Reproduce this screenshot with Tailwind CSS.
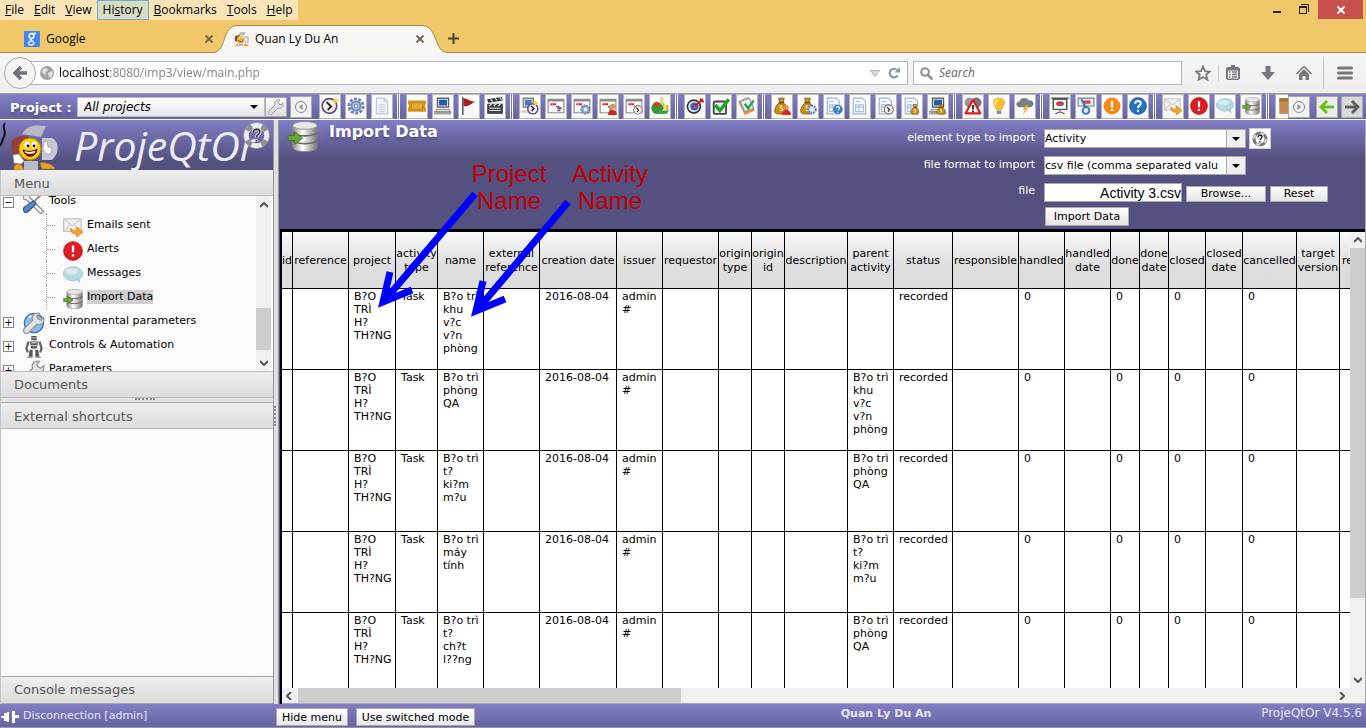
<!DOCTYPE html>
<html lang="en">
<head>
  <meta charset="utf-8" />
  <title>Quan Ly Du An</title>
  <script src="https://cdn.jsdelivr.net/npm/@tailwindcss/browser@4"></script>
</head>
<body class="h-screen flex flex-col overflow-hidden relative bg-white text-black text-xs font-['DejaVu_Sans',Verdana,sans-serif]">

  <!-- icon sprite -->
  <svg class="absolute w-0 h-0">
    <defs>
      <linearGradient id="metal"><stop offset="0" stop-color="#8a8a8a"/><stop offset=".4" stop-color="#fff"/><stop offset="1" stop-color="#777"/></linearGradient>
      <symbol id="i-clock" viewBox="0 0 16 16"><circle cx="7.500" cy="8" r="6.500" fill="#f4f0e0" stroke="#5c4c8c" stroke-width="1.500"/><path d="M5 4.500l4 4-3 3" stroke="#222" stroke-width="1.700" fill="none"/><path d="M13 0l1 2 2 1-2 1-1 2-1-2-2-1 2-1z" fill="#f6d61c"/></symbol>
      <symbol id="i-gear" viewBox="0 0 16 16"><circle cx="8" cy="8" r="6.300" fill="none" stroke="#6f84b4" stroke-width="2.600" stroke-dasharray="2.600 1.350"/><circle cx="8" cy="8" r="4" fill="#b9c8e6" stroke="#7188bb" stroke-width="1.800"/><circle cx="8" cy="8" r="1.600" fill="#fff" stroke="#7188bb"/></symbol>
      <symbol id="i-doc" viewBox="0 0 16 16"><path d="M3 1h7l3 3v11H3z" fill="#f3f7fd" stroke="#b8c4da"/><path d="M10 1v3h3M5 7h6M5 9h6M5 11h6M5 13h6" stroke="#c5cfe2" fill="none"/></symbol>
      <symbol id="i-ticket" viewBox="0 0 16 16"><path d="M0 3h16v3l-1 2 1 2v3H0v-3l1-2-1-2z" fill="#d8951a"/><path d="M3 5h10v6H3z" fill="#e8ab35" stroke="#b87a10" stroke-width=".7"/></symbol>
      <symbol id="i-pc" viewBox="0 0 16 16"><path d="M3 1h10v8H3z" fill="#cfd6dc" stroke="#555"/><path d="M4.500 2.500h7v5h-7z" fill="#2460b0"/><path d="M2 11h12v3H2zM0 13h15v2H0z" fill="#ddd" stroke="#777" stroke-width=".7"/></symbol>
      <symbol id="i-flag" viewBox="0 0 16 16"><path d="M2.500 0v16" stroke="#555" stroke-width="1.300"/><path d="M3 1c4 0 5 3 11 3-4 1-5 5-11 4z" fill="#a81c20"/></symbol>
      <symbol id="i-clap" viewBox="0 0 16 16"><path d="M1 6h14v9H1z" fill="#444"/><path d="M1 2l13-2 1 3L2 5z" fill="#333"/><path d="M4 2l2 2M8 1l2 2M12 .5l2 2M3 8l2-2M7 8l2-2M11 8l2-2M3 10h10M3 12h10" stroke="#ddd"/></symbol>
      <symbol id="i-pcclock" viewBox="0 0 16 16"><path d="M2 1h9v8H2z" fill="#cfd6dc" stroke="#777"/><path d="M3.500 2.500h6v5h-6z" fill="#5577b5"/><path d="M0 12h12v2H0z" fill="#ccc"/><circle cx="10.500" cy="10.500" r="4.500" fill="#eee" stroke="#5b4a90" stroke-width="1.300"/><path d="M9 8l2.500 2.500-2 2" stroke="#222" fill="none" stroke-width="1.300"/><path d="M13 3l1 1.500 1.500 1-1.500 1-1 1.500-1-1.500-1.500-1 1.500-1z" fill="#f6d61c"/></symbol>
      <symbol id="i-plan" viewBox="0 0 16 16"><path d="M1 2h14v12H1z" fill="#fff" stroke="#888"/><path d="M1 2h14v2H1z" fill="#888"/><path d="M3 6.500h5M9 10h4" stroke="#e02020" stroke-width="1.800"/><path d="M8 8.500h3M9 12h3" stroke="#3450c0" stroke-width="1.500"/><path d="M5 4v10M9 4v10" stroke="#ddd" stroke-width=".5"/></symbol>
      <symbol id="i-plangear" viewBox="0 0 16 16"><use href="#i-plan"/><circle cx="11" cy="11" r="3.500" fill="#9fb4dc" stroke="#6f86b8" stroke-width="2" stroke-dasharray="1.700 .7"/><circle cx="11" cy="11" r="1.400" fill="#fff"/></symbol>
      <symbol id="i-planman" viewBox="0 0 16 16"><use href="#i-plan"/><circle cx="12" cy="8.500" r="2.500" fill="#d99a50"/><path d="M8 16c0-6 8-6 8 0z" fill="#d22"/></symbol>
      <symbol id="i-planclock" viewBox="0 0 16 16"><use href="#i-plan"/><circle cx="11.500" cy="11.500" r="3.800" fill="#f3efdc" stroke="#8a7d9c"/><path d="M10 9.500l2 2-1 2" stroke="#222" fill="none"/></symbol>
      <symbol id="i-chart" viewBox="0 0 16 16"><path d="M10 5h2v6h-2zM13 7h2.500v5H13z" fill="#d0c020"/><path d="M8 0h3v7H8z" fill="#ded97c"/><circle cx="5.500" cy="10" r="5.200" fill="#35973a"/><path d="M5.500 10L2 5.500A5.200 5.200 0 0 1 8 5.400z" fill="#e53525"/><path d="M7 12h9l-2 3H6z" fill="#4ca24a"/></symbol>
      <symbol id="i-target" viewBox="0 0 16 16"><circle cx="7" cy="8.500" r="6.500" fill="#333"/><circle cx="7" cy="8.500" r="5" fill="#e8e8f2"/><circle cx="7.500" cy="8.500" r="3.600" fill="#3266c0"/><circle cx="8" cy="8.500" r="1.300" fill="#f44"/><path d="M8 8l7-6M13 1v3h3" stroke="#d01818" stroke-width="1.500" fill="none"/></symbol>
      <symbol id="i-check" viewBox="0 0 16 16"><rect x="1.500" y="4" width="11" height="11" rx="1.500" fill="#eee" stroke="#444" stroke-width="1.600"/><path d="M3 7l4 5 8-10" stroke="#1ea51e" stroke-width="3" fill="none"/></symbol>
      <symbol id="i-notes" viewBox="0 0 16 16"><path d="M0 4l9-4 6 12-9 4z" fill="#f08c28"/><path d="M2 4l8-3 4 9-8 3z" fill="#eaf2fb" stroke="#6a9cd0"/><path d="M6 6l3 4 5-7" stroke="#25a030" stroke-width="2" fill="none"/></symbol>
      <symbol id="i-bag" viewBox="0 0 16 16"><path d="M5 1h5L9 5c5 3 5 10 1 10H4C0 15 1 8 6 5z" fill="#c98e1d" stroke="#8d5f0c" stroke-width=".8"/><path d="M5 5h5" stroke="#70480a" stroke-width="1.300"/><path d="M8.500 8H6.500v2h2v2h-2.500" stroke="#ffe9a8" fill="none"/></symbol>
      <symbol id="i-bagman" viewBox="0 0 16 16"><use href="#i-bag"/><circle cx="12" cy="9" r="2" fill="#d99a50"/><path d="M8 16c0-6 8-6 8 0z" fill="#d22"/></symbol>
      <symbol id="i-baggear" viewBox="0 0 16 16"><use href="#i-bag"/><circle cx="11.500" cy="11" r="3.300" fill="#dde6f5" stroke="#6f86b8" stroke-width="2" stroke-dasharray="1.700 .7"/></symbol>
      <symbol id="i-bill" viewBox="0 0 16 16"><path d="M2 1h8l3 3v11H2z" fill="#f5f9ff" stroke="#a0b4cf"/><path d="M4 4h4M4 7h7v6H4zM7 7v6M4 9h7" stroke="#a9c0dd" fill="none"/></symbol>
      <symbol id="i-billq" viewBox="0 0 16 16"><use href="#i-bill"/><circle cx="11.500" cy="11" r="4.200" fill="#3182c8"/><path d="M10 10c0-2 3-2 3 0 0 1-1.500 1-1.500 2M11.500 13v1" stroke="#fff" fill="none"/></symbol>
      <symbol id="i-billclock" viewBox="0 0 16 16"><use href="#i-bill"/><circle cx="10.500" cy="11" r="4" fill="#f3efdc" stroke="#777090"/><path d="M9 9l2 2-1 2" stroke="#222" fill="none"/></symbol>
      <symbol id="i-billbag" viewBox="0 0 16 16"><use href="#i-bill"/><use href="#i-bag" x="6" y="6" width="10" height="10"/></symbol>
      <symbol id="i-pcbag" viewBox="0 0 16 16"><use href="#i-pc"/><use href="#i-bag" x="6" y="6" width="10" height="10"/></symbol>
      <symbol id="i-warn" viewBox="0 0 16 16"><circle cx="5" cy="5" r="4.500" fill="#999"/><circle cx="11" cy="5" r="4.500" fill="#777"/><path d="M8 2.500l6.500 12h-13z" fill="#fff" stroke="#d32222" stroke-width="2" stroke-linejoin="round"/><path d="M8 7v4M8 12v1.500" stroke="#111" stroke-width="1.500"/></symbol>
      <symbol id="i-bulb" viewBox="0 0 16 16"><path d="M8 1c6 0 6 5 3 8l-.5 2h-5L5 9C2 6 2 1 8 1z" fill="#fbc02c" stroke="#e8a015" stroke-width=".6"/><path d="M7 3c-2 0-3 2-2 4" stroke="#fff3b0" fill="none" stroke-width="1.500"/><path d="M6 12h4v3H6z" fill="#888"/></symbol>
      <symbol id="i-storm" viewBox="0 0 16 16"><path d="M3 9C-1 8 0 4 3 4c1-4 7-4 8-1 5-1 6 5 2 6z" fill="#7a7f86"/><path d="M9 7l-3 4h2l-2 5 5-6H9l2-3z" fill="#f7a81b"/></symbol>
      <symbol id="i-board" viewBox="0 0 16 16"><path d="M0 1h16M2 2h12v9H2z" fill="#fff" stroke="#555" stroke-width="1.300"/><ellipse cx="8" cy="6" rx="3.500" ry="2.200" fill="#d33"/><path d="M8 6h3.500A3.500 2.200 0 0 1 8 8z" fill="#57c"/><path d="M8 11v3M4 15l4-2 4 2" stroke="#666" fill="none"/></symbol>
      <symbol id="i-review" viewBox="0 0 16 16"><path d="M1 1h14v7H1z" fill="#eef" stroke="#777"/><path d="M6 3h6v3H6z" fill="#d44"/><path d="M4 2l4 8" stroke="#3a7ab8" stroke-width="2"/><circle cx="8" cy="12" r="3" fill="#d9ecfa" stroke="#3a7ab8" stroke-width="1.700"/></symbol>
      <symbol id="i-orange" viewBox="0 0 16 16"><circle cx="8" cy="8" r="7.500" fill="#f28a1c"/><path d="M8 3.500v5.500M8 10.500v2" stroke="#fff" stroke-width="2"/></symbol>
      <symbol id="i-help" viewBox="0 0 16 16"><circle cx="8" cy="8" r="7.500" fill="#2671bd" stroke="#1a558f" stroke-width=".6"/><path d="M5.500 6c0-3.500 5-3 5-.3 0 1.800-2.500 1.700-2.500 4M8 11.300v1.900" stroke="#fff" stroke-width="1.800" fill="none"/></symbol>
      <symbol id="i-mail" viewBox="0 0 16 16"><path d="M.5 1.500h14v10H.5z" fill="#f1f1f1" stroke="#c4c4c4"/><path d="M.5 1.500l7 5.500 7-5.500M.5 11.500l5-5M14.500 11.500l-5-5" fill="none" stroke="#cfcfcf"/><path d="M6 9c2 2 4 2 5 1.500V8l5 4-5 4v-2.500C8 14 6 12 6 9z" fill="#f5a32a" stroke="#d07f12" stroke-width=".6"/></symbol>
      <symbol id="i-alert" viewBox="0 0 16 16"><circle cx="8" cy="8" r="7.500" fill="#dd1c20" stroke="#a81014" stroke-width=".6"/><path d="M8 3.500v5.500M8 10.500v2" stroke="#fff" stroke-width="1.900"/></symbol>
      <symbol id="i-msg" viewBox="0 0 16 16"><ellipse cx="8" cy="7" rx="7.700" ry="5.700" fill="#b9d8e3" stroke="#9cbccb" stroke-width=".6"/><path d="M10 11l4 4-1-5z" fill="#a9cbd8"/><ellipse cx="7" cy="5" rx="5" ry="2.500" fill="#d6eaf1"/></symbol>
      <symbol id="i-db" viewBox="0 0 16 16"><path d="M3 2.300v11.200c0 3 12.500 3 12.500 0V2.300z" fill="url(#metal)" stroke="#888" stroke-width=".4"/><ellipse cx="9.250" cy="2.300" rx="6.250" ry="2" fill="#e6e6e6" stroke="#999" stroke-width=".5"/><path d="M3 5.800c1 2.500 11.500 2.500 12.500 0M3 9.800c1 2.500 11.500 2.500 12.500 0" stroke="#666" fill="none" stroke-width=".8"/><path d="M.5 7.500H4v-2l4 3.300-4 3.300v-2H.5z" fill="#6aa53a" stroke="#46791e" stroke-width=".5"/></symbol>
      <symbol id="i-wrench" viewBox="0 0 16 16"><path d="M1 15c-1-1-1-2 0-3l6-6c-1-3 1-6 5-5l-2 2 1 2 2 1 2-2c1 4-2 6-5 5l-6 6c-1 1-2 1-3 0z" fill="#e2e2e2" stroke="#9a9a9a"/></symbol>
      <symbol id="i-tools" viewBox="0 0 16 16"><path d="M1 1l3 0 1 3 10 10-2 2L3 6 0 5z" fill="#eee" stroke="#888" stroke-width=".8"/><path d="M15 0l-8 8" stroke="#999" stroke-width="1.600"/><path d="M7.500 6.500l2 2L4 14c-2 2-5 0-3-3z" fill="#5b88c4" stroke="#2c568f" stroke-width=".8"/></symbol>
      <symbol id="i-env" viewBox="0 0 16 16"><circle cx="8" cy="8" r="7" fill="#8cbcec" stroke="#3a6fae"/><path d="M4 4c3-2 5 0 4 2M3 9c2 0 3 2 5 1" stroke="#dff0ff" fill="none" stroke-width="1.500"/><use href="#i-wrench"/></symbol>
      <symbol id="i-robot" viewBox="0 0 16 16"><path d="M6 0h4v3H6zM5 4h6l-1 5H6zM5 10h2v5H4zM9 10h2l1 5H9z" fill="#555"/><path d="M4 4L2.500 9l1 3M12 4l1.500 5-1 3" stroke="#666" stroke-width="1.700" fill="none"/><path d="M6 5h4M6 7h4M6 1.500h4" stroke="#ccc" stroke-width=".8"/><path d="M3 15.500h4M9 15.500h4" stroke="#999"/></symbol>
      <symbol id="i-book" viewBox="0 0 16 16"><path d="M2 1h14v14H2z" fill="#c28a4e"/><path d="M2 1h14v3H2z" fill="#a87238"/></symbol>
      <symbol id="i-face" viewBox="0 0 60 50"><path d="M5 3c-4 5 3 8-2 16-1 4-3 8-6 7" stroke="#111" stroke-width="2" fill="none"/><path d="M22 14c6-10 14-9 24-8l-5 11z" fill="#b9b9c4"/><path d="M12 20c4-4 10-5 16-4v24H16c-4-6-6-14-4-20z" fill="#96403e"/><path d="M42 18h10c8 4 7 16 0 22H42z" fill="#c8c8d4"/><path d="M44 22l3-1 1 6 4 1-1 6h-5l-3-5z" fill="#fff" stroke="#888" stroke-width=".6"/><circle cx="30" cy="29" r="11" fill="#fad016" stroke="#b58508"/><ellipse cx="27" cy="25" rx="2.400" ry="3.600" fill="#fff"/><ellipse cx="34" cy="25" rx="2.400" ry="3.600" fill="#fff"/><circle cx="28" cy="26" r="1.400"/><circle cx="34" cy="26" r="1.400"/><path d="M23 30c4 2 10 2 14-1-1 9-11 10-14 1z" fill="#a01515" stroke="#400"/><path d="M24.500 31c4 1.500 8 1 11-.5l-1 2.500c-3 1-6 1-9 0z" fill="#fff"/><path d="M24 41h14v9H24z" fill="#b9b9c8"/><path d="M13 35l6-1 5 7-3 3-7-1z" fill="#fff" stroke="#999" stroke-width=".6"/><path d="M14 47c2-5 8-4 10 3h-10zM40 43c6-1 14 2 15 6H42z" fill="#e9a31c" stroke="#b06f0c" stroke-width=".5"/></symbol>
      <symbol id="i-ring" viewBox="0 0 26 26"><circle cx="13" cy="13" r="10" fill="none" stroke="#ececec" stroke-width="5"/><circle cx="13" cy="13" r="10" fill="none" stroke="#8f8f8f" stroke-width="5" stroke-dasharray="6 9.700" stroke-dashoffset="-4.800"/><circle cx="13" cy="13" r="12.400" fill="none" stroke="#888" stroke-width=".5"/><path d="M10 10c0-4 7-4 6 0 0 2-3 2-3 5M13 17v2" stroke="#e8e8f4" stroke-width="3.500" fill="none"/><path d="M10 10c0-4 7-4 6 0 0 2-3 2-3 5M13 17v2" stroke="#444" stroke-width="1.800" fill="none"/></symbol>
      <symbol id="i-up" viewBox="0 0 8 6"><path d="M0 5l4-4 4 4" stroke="#555" stroke-width="2" fill="none"/></symbol>
      <symbol id="i-down" viewBox="0 0 8 6"><path d="M0 1l4 4 4-4" stroke="#555" stroke-width="2" fill="none"/></symbol>
      <symbol id="i-caret" viewBox="0 0 8 4"><path d="M0 0h8L4 4z"/></symbol>
      <symbol id="i-x" viewBox="0 0 8 8"><path d="M0.500 0.500l7 7M7.500 0.500l-7 7" stroke="#756a54" stroke-width="2"/></symbol>
    </defs>
  </svg>

  <!-- browser window -->
  <header class="h-[53px] shrink-0 bg-[#f0c869] border-b border-[#a58a48] flex flex-col font-['Open_Sans','Noto_Sans',sans-serif]">
    <div class="flex items-start justify-between">
      <nav class="flex h-5 bg-[#f8e4b6] leading-5">
        <a href="#" class="px-[5px]"><u>F</u>ile</a>
        <a href="#" class="px-[5px]"><u>E</u>dit</a>
        <a href="#" class="px-[5px]"><u>V</u>iew</a>
        <a href="#" class="px-[5px] bg-[#d9dcc4] border border-[#79a7c4] leading-[18px]">Hi<u>s</u>tory</a>
        <a href="#" class="px-[5px]"><u>B</u>ookmarks</a>
        <a href="#" class="px-[5px]"><u>T</u>ools</a>
        <a href="#" class="px-[5px]"><u>H</u>elp</a>
      </nav>
      <div class="flex items-start mr-[3px]">
        <button aria-label="Minimize" class="w-5 h-5"><svg class="w-5 h-5" viewBox="0 0 20 20"><path d="M7 11h8v2H7z" fill="#222"/></svg></button>
        <button aria-label="Restore" class="w-8 h-5 flex justify-center"><svg class="w-5 h-5" viewBox="0 0 20 20"><path d="M7.500 6.500h7v7h-7zM9 4.500h7.500V12" fill="none" stroke="#222"/><path d="M7 6h8v2H7z" fill="#222"/></svg></button>
        <button aria-label="Close" class="w-[45px] h-[19px] bg-[#c8504f] flex justify-center items-center"><svg class="w-2 h-2" viewBox="0 0 8 8"><path d="M0.500 0.500l7 7M7.500 0.500l-7 7" stroke="#fff" stroke-width="2"/></svg></button>
      </div>
    </div>
    <div class="flex flex-1 items-end">
      <div class="w-[213px] h-7 flex items-center pl-6 gap-[6px] pt-px">
        <svg class="w-4 h-4" viewBox="0 0 16 16"><rect width="16" height="16" rx="1" fill="#4285f4"/><ellipse cx="7.500" cy="5" rx="2.300" ry="2.500" fill="none" stroke="#fff" stroke-width="1.500"/><path d="M9 2.500h3M7 7.500c-2 1.500 2.500 2 2.800 4 .2 3.500-5.800 3-5.300.5.300-1.700 2-1.800 3.500-1.800" fill="none" stroke="#fff" stroke-width="1.300"/></svg>
        <span class="flex-1">Google</span>
        <svg class="w-2 h-2"><use href="#i-x"/></svg>
      </div>
      <div class="relative w-[235px] h-7 flex items-center pl-5 pr-6 gap-[6px] -mb-px">
        <svg class="absolute inset-0 w-full h-full" viewBox="0 0 235 28" preserveAspectRatio="none"><path d="M0 27.500C14 27.500 8 .5 25 .5H208C226 .5 220 27.500 235 27.500V29H0z" fill="#f6f6f5" stroke="#a58a48"/></svg>
        <svg class="relative w-4 h-4" viewBox="6 4 50 46"><use href="#i-face" width="60" height="50"/></svg>
        <span class="relative flex-1">Quan Ly Du An</span>
        <svg class="relative w-2 h-2"><use href="#i-x"/></svg>
      </div>
      <button aria-label="New tab" class="w-3 h-7 flex items-center"><svg class="w-[11px] h-[11px]" viewBox="0 0 11 11"><path d="M5.500 0v11M0 5.500h11" stroke="#4b4433" stroke-width="2"/></svg></button>
    </div>
  </header>

  <div class="h-10 shrink-0 flex items-center bg-linear-to-b from-[#f6f6f6] to-[#eeeeee] font-['Open_Sans','Noto_Sans',sans-serif]">
    <button aria-label="Back" class="relative z-10 ml-1 w-8 h-8 rounded-full bg-[#f4f4f4] border border-[#a9a9a9] flex items-center justify-center"><svg class="w-[15px] h-[14px]" viewBox="0 0 15 14"><path d="M8 1L2 7l6 6M2 7h12" stroke="#6f7276" stroke-width="3.500" fill="none"/></svg></button>
    <div class="flex-1 h-6 -ml-2 pl-[11px] pr-[5px] bg-white border border-[#b1b8c4] flex items-center gap-[5px]">
      <svg class="w-[14px] h-[14px]" viewBox="0 0 14 14"><circle cx="7" cy="7" r="7" fill="#a3a3a3"/><path d="M3 3l3-1 2 2-2 2-1 3-3-3zM8 7l4-2 1 2-2 5-2-1z" fill="#e4e4e4"/></svg>
      <input aria-label="Address" value="localhost:8080/imp3/view/main.php" class="flex-1 min-w-0 outline-none bg-linear-to-r from-black from-[50px] to-[#7e7e7e] to-[50px] bg-clip-text text-transparent" />
      <svg class="w-[10px] h-[7px]" viewBox="0 0 10 7"><path d="M0.500 0.500h9L5 6.500z" fill="#d5dce2" stroke="#aab4bd"/></svg>
      <svg class="w-3 h-3 ml-[3px] mr-[2px]" viewBox="0 0 12 12"><path d="M9.500 8.500A4.300 4.300 0 1 1 9 3" stroke="#8796a5" stroke-width="2.200" fill="none"/><path d="M12 0v5.500H6.500z" fill="#8796a5"/></svg>
    </div>
    <div class="w-[269px] h-6 ml-[5px] px-[6px] bg-white border border-[#b1b8c4] flex items-center gap-[6px]">
      <svg class="w-[13px] h-[13px]" viewBox="0 0 13 13"><circle cx="5" cy="5" r="3.800" stroke="#8d8d8d" stroke-width="2" fill="none"/><path d="M8 8l4.500 4.500" stroke="#8d8d8d" stroke-width="2.500"/></svg>
      <input aria-label="Search" placeholder="Search" class="flex-1 min-w-0 italic outline-none placeholder:text-[#666]" />
    </div>
    <div class="flex items-center w-[184px] text-[#75787c]">
      <svg class="w-4 h-4 ml-[13px]" viewBox="0 0 16 16"><path d="M8 1.500l2 4.600 5 .4-3.800 3.200 1.200 4.900L8 12l-4.400 2.600 1.200-4.900L1 6.500l5-.4z" fill="none" stroke="currentColor" stroke-width="1.800"/></svg>
      <span class="w-px h-4 bg-[#c5ccd4] ml-[7px]"></span>
      <svg class="w-4 h-4 ml-[6px]" viewBox="0 0 16 16"><path d="M6 0h4v2h3.500L15 3.500v10L13.500 15h-11L1 13.500v-10L2.500 2H6z" fill="currentColor"/><path d="M3 5.500h10v8H3z" fill="#f2f2f2"/><path d="M4 7h1.500M7 7h5M4 9.500h1.500M7 9.500h5M4 12h1.500M7 12h5" stroke="currentColor" stroke-width="1.300"/></svg>
      <svg class="w-4 h-4 ml-[19px]" viewBox="0 0 16 16"><path d="M5.500 1h5v6H15l-7 8-7-8h4.500z" fill="currentColor"/></svg>
      <svg class="w-4 h-4 ml-5" viewBox="0 0 16 16"><path d="M.5 9L8 1.500 15.500 9" fill="none" stroke="currentColor" stroke-width="1.500"/><path d="M3 9l5-5 5 5v6H9.500v-4h-3v4H3z" fill="currentColor"/></svg>
      <span class="w-px h-8 bg-[#bac4cf] ml-[11px]"></span>
      <svg class="w-4 h-[14px] ml-[13px]" viewBox="0 0 16 14"><path d="M1.500 2h13M1.500 7h13M1.500 12h13" stroke="currentColor" stroke-width="3" stroke-linecap="round"/></svg>
    </div>
  </div>

  <!-- application toolbar -->
  <div class="h-[27px] shrink-0 border-t border-t-[#a0a0a0] border-b border-b-white bg-linear-to-b from-[#827ec6] to-[#6764a0] flex items-center">
    <label for="project" class="pl-[10px] pt-[2px] w-[77px] text-[13px] font-bold text-white text-shadow-lg">Project :</label>
    <div class="relative">
      <select id="project" class="appearance-none w-[188px] h-5 px-[6px] italic bg-linear-to-b from-white to-[#e6e6e6] border border-[#bbb]"><option>All projects</option></select>
      <svg class="absolute right-[7px] top-2 w-2 h-1 pointer-events-none"><use href="#i-caret"/></svg>
    </div>
    <button aria-label="Project parameters" class="w-[22px] h-5 bg-linear-to-b from-white to-[#ddd] border border-[#aaa] flex items-center justify-center"><svg class="w-[18px] h-4"><use href="#i-wrench"/></svg></button>
    <button aria-label="Scroll left" class="ml-[3px] w-[22px] h-[22px] bg-[#f2f2f2] border border-[#aaa] flex items-center justify-center"><svg class="w-3 h-3" viewBox="0 0 12 12"><circle cx="6" cy="6" r="5.500" fill="none" stroke="#888"/><path d="M7.500 3v6L4 6z" fill="#888"/></svg></button>
    <div id="toolbar" class="flex-1 min-w-0 h-[25px] ml-[7px] flex overflow-hidden"></div>
    <button aria-label="Scroll right" class="w-[22px] h-[22px] bg-[#f2f2f2] border border-[#aaa] flex items-center justify-center"><svg class="w-3 h-3" viewBox="0 0 12 12"><circle cx="6" cy="6" r="5.500" fill="none" stroke="#888"/><path d="M4.500 3v6L8 6z" fill="#888"/></svg></button>
    <button aria-label="Previous" class="w-[22px] h-[22px] ml-[6px] bg-[#ececec] border border-[#aaa] flex items-center justify-center"><svg class="w-4 h-4" viewBox="0 0 16 16"><path d="M8 2L2 8l6 6M2 8h13" stroke="#6cc01c" stroke-width="3" fill="none"/></svg></button>
    <button aria-label="Next" class="w-[22px] h-[22px] ml-[3px] mr-[3px] bg-[#d9d9d9] border border-[#aaa] flex items-center justify-center"><svg class="w-4 h-4" viewBox="0 0 16 16"><path d="M8 2l6 6-6 6M14 8H1" stroke="#606060" stroke-width="3" fill="none"/></svg></button>
  </div>

  <div class="flex-1 min-h-0 flex">
    <!-- left panel -->
    <aside class="w-[273px] shrink-0 flex flex-col border-l border-[#c4c4c4]">
      <div class="relative h-[50px] shrink-0 -ml-px bg-linear-to-b from-[#827ec6] to-[#545180] to-80% overflow-hidden">
        <svg class="absolute left-0 top-0 w-[60px] h-[50px]"><use href="#i-face"/></svg>
        <div class="pl-[74px] text-[41px] leading-[50px] italic text-[#ecebf8] font-['Open_Sans',sans-serif]">ProjeQtOr</div>
        <svg class="absolute right-[3px] top-[2px] w-[27px] h-[27px]"><use href="#i-ring"/></svg>
      </div>
      <h2 class="h-[26px] shrink-0 pl-[13px] leading-[27px] text-[13px] text-[#555] bg-linear-to-b from-[#eeeeee] to-[#dcdcdc] border-b border-[#bbb]">Menu</h2>
      <div class="h-[175px] shrink-0 flex overflow-hidden bg-[#fafafa]">
        <ul id="tree" class="flex-1 -mt-[7px] text-[11px]"></ul>
        <div class="w-[15px] bg-[#f0f0f0] flex flex-col items-center mr-[2px]">
          <svg class="w-2 h-[6px] mt-[6px]"><use href="#i-up"/></svg>
          <div class="w-full h-[42px] mt-[100px] bg-[#cdcdcd]"></div>
          <svg class="w-2 h-[6px] mt-[10px]"><use href="#i-down"/></svg>
        </div>
      </div>
      <h2 class="h-[27px] shrink-0 pl-[13px] leading-[26px] text-[13px] text-[#555] bg-linear-to-b from-[#eeeeee] to-[#dcdcdc] border-t border-b border-[#bbb]">Documents</h2>
      <div class="h-[5px] shrink-0 bg-[#e4e4e4] border-b border-[#aaa] flex justify-center"><span class="w-5 ml-4 border-t-2 border-dotted border-[#888]"></span></div>
      <h2 class="h-[26px] shrink-0 pl-[13px] leading-[27px] text-[13px] text-[#555] bg-linear-to-b from-[#eeeeee] to-[#dcdcdc] border-b border-[#bbb]">External shortcuts</h2>
      <div class="flex-1 bg-[#fafafa]"></div>
      <h2 class="h-7 shrink-0 pl-[13px] leading-[25px] text-[13px] text-[#555] bg-linear-to-b from-[#eeeeee] to-[#dcdcdc] border-t border-b border-[#aaa]">Console messages</h2>
    </aside>
    <div class="w-[6px] shrink-0 bg-[#e0e0e0] border-l border-r border-[#999] pt-[286px]"><span class="block h-5 border-l-2 border-dotted border-[#888]"></span></div>

    <!-- import screen -->
    <main class="flex-1 min-w-0 flex flex-col bg-[#545180] border-r border-[#aaa]">
      <section class="h-[109px] shrink-0 flex items-start bg-linear-to-b from-[#827ec6] to-[#545180] to-35%">
        <svg class="w-[31px] h-[31px] ml-2 mt-px"><use href="#i-db"/></svg>
        <h1 class="ml-[11px] text-base leading-6 font-bold text-white text-shadow-lg">Import Data</h1>
        <form class="ml-auto mr-[37px] mt-[9px] grid grid-cols-[auto_auto] gap-x-[9px] text-white text-[11px]">
          <label for="type" class="text-right leading-[18px] h-[27px]">element type to import</label>
          <div class="flex items-start">
            <div class="relative">
              <select id="type" class="appearance-none w-[202px] h-[19px] bg-white text-black border border-[#aaa] leading-4"><option>Activity</option></select>
              <span class="absolute right-px top-px w-[19px] h-[17px] bg-[#eee] border-l border-[#aaa] flex items-center justify-center pointer-events-none"><svg class="w-2 h-1"><use href="#i-caret"/></svg></span>
            </div>
            <button type="button" aria-label="Help" class="ml-[3px] -mt-px w-[22px] h-[21px] bg-white border border-[#ccc] flex items-center justify-center"><svg class="w-4 h-4" viewBox="0 0 16 16"><circle cx="8" cy="8" r="6" fill="none" stroke="#777" stroke-width="3"/><circle cx="8" cy="8" r="6" fill="none" stroke="#ddd" stroke-width="2" stroke-dasharray="4 5.400"/><path d="M6 6.500c0-3 4-2.500 4-.5 0 1.500-2 1.500-2 3M8 10v1.500" stroke="#111" stroke-width="1.300" fill="none"/></svg></button>
          </div>
          <label for="format" class="text-right leading-[18px] h-[27px]">file format to import</label>
          <div class="relative">
            <select id="format" class="appearance-none w-[202px] h-[19px] bg-white text-black border border-[#aaa] leading-4"><option>csv file (comma separated valu</option></select>
            <span class="absolute left-[182px] top-px w-[19px] h-[17px] bg-[#eee] border-l border-[#aaa] flex items-center justify-center pointer-events-none"><svg class="w-2 h-1"><use href="#i-caret"/></svg></span>
          </div>
          <label for="file" class="text-right leading-[15px]">file</label>
          <div class="flex items-start gap-1 text-black h-6">
            <input id="file" value="Activity 3.csv" class="w-[138px] h-[19px] bg-white border border-[#aaa] text-right text-sm font-['Liberation_Sans',Arial,sans-serif]" />
            <button type="button" class="w-20 h-4 mt-[3px] leading-[14px] bg-linear-to-b from-white to-[#e4e4e4] border border-[#aaa]">Browse...</button>
            <button type="button" class="w-[58px] h-4 mt-[3px] leading-[14px] bg-linear-to-b from-white to-[#e4e4e4] border border-[#aaa]">Reset</button>
          </div>
          <button class="col-start-2 justify-self-start ml-px w-[84px] h-[19px] leading-[17px] text-black bg-linear-to-b from-white to-[#e4e4e4] border border-[#aaa]">Import Data</button>
        </form>
      </section>

      <div class="flex-1 min-h-0 flex flex-col ml-px border-l-2 border-t-[3px] border-black bg-[#f0f0f0]">
        <div class="flex-1 min-h-0 flex">
          <div class="flex-1 min-w-0 overflow-hidden bg-white">
            <table class="table-fixed w-[1094px] border-separate border-spacing-0 text-[11px]">
              <colgroup>
                <col class="w-[11px]"><col class="w-[56px]"><col class="w-[47px]"><col class="w-[42px]"><col class="w-[46px]"><col class="w-[56px]"><col class="w-[77px]"><col class="w-[46px]"><col class="w-[56px]"><col class="w-[33px]"><col class="w-[33px]"><col class="w-[63px]"><col class="w-[46px]"><col class="w-[59px]"><col class="w-[66px]"><col class="w-[46px]"><col class="w-[46px]"><col class="w-[29px]"><col class="w-[29px]"><col class="w-[37px]"><col class="w-[37px]"><col class="w-[54px]"><col class="w-[43px]"><col class="w-[36px]">
              </colgroup>
              <thead><tr id="head"></tr></thead>
              <tbody id="rows"></tbody>
            </table>
          </div>
          <div class="w-[15px] bg-[#f0f0f0] flex flex-col items-center">
            <svg class="w-2 h-[6px] mt-[5px]"><use href="#i-up"/></svg>
            <div class="w-full h-[350px] mt-[5px] bg-[#cdcdcd]"></div>
            <svg class="w-2 h-[6px] mt-auto mb-[5px]"><use href="#i-down"/></svg>
          </div>
        </div>
        <div class="h-4 shrink-0 flex items-center border-b border-[#aaa]">
          <svg class="w-[6px] h-2 ml-1" viewBox="0 0 6 8"><path d="M5 0L1 4l4 4" stroke="#555" stroke-width="2" fill="none"/></svg>
          <div class="w-[383px] h-full ml-[6px] bg-[#cdcdcd]"></div>
          <svg class="w-[6px] h-2 ml-auto mr-5" viewBox="0 0 6 8"><path d="M1 0l4 4-4 4" stroke="#555" stroke-width="2" fill="none"/></svg>
        </div>
      </div>
    </main>
  </div>

  <footer class="h-6 shrink-0 bg-linear-to-b from-[#827ec6] to-[#6764a0] border-b border-[#999] flex items-start text-[#e6e5f4]">
    <a href="#" class="w-[276px] h-6 pl-px pt-px flex items-center gap-1 text-[11px]"><svg class="w-[18px] h-3" viewBox="0 0 18 12"><path d="M0 5h3V2h4v8H3V7H0zM6 1h2v10H6zM11 0h3v4h4v3h-4v5h-3z" fill="#fff"/></svg>Disconnection [admin]</a>
    <button class="w-[72px] h-[18px] mt-1 pt-px text-[11px] leading-4 text-black bg-linear-to-b from-white to-[#e8e8e8] border border-[#aaa]">Hide menu</button>
    <button class="w-[119px] h-[18px] mt-1 ml-2 pt-px text-[11px] leading-4 text-black bg-linear-to-b from-white to-[#e8e8e8] border border-[#aaa]">Use switched mode</button>
    <strong class="flex-1 text-center pl-9 text-[11px] leading-5">Quan Ly Du An</strong>
    <span class="pr-1 leading-[19px]">ProjeQtOr V4.5.6</span>
  </footer>

  <!-- annotations lying over the screen -->
  <svg class="absolute left-[370px] top-[185px] w-[210px] h-[140px] pointer-events-none" viewBox="370 185 210 140" fill="none" stroke="#0000ff" stroke-width="7">
    <path d="M475 194L385 300M390 272L383 302L412 290"/>
    <path d="M568 202L478 309M483 281L476 311L505 299"/>
  </svg>
  <p class="absolute left-[459px] top-[160px] w-[100px] text-center text-2xl leading-[27px] text-[#c00000] font-['Liberation_Sans',Arial,sans-serif]">Project<br>Name</p>
  <p class="absolute left-[560px] top-[160px] w-[100px] text-center text-2xl leading-[27px] text-[#c00000] font-['Liberation_Sans',Arial,sans-serif]">Activity<br>Name</p>

  <script>
    const groups = [
      ["clock", "gear", "doc"],
      ["ticket", "pc", "flag", "clap"],
      ["pcclock", "plan", "plangear", "planman", "planclock", "chart"],
      ["target", "check", "notes"],
      ["bagman", "baggear", "billq", "bill", "billclock", "billbag", "pcbag"],
      ["warn", "bulb", "storm"],
      ["board", "review", "orange", "help"],
      ["mail", "alert", "msg", "db"],
      ["book"],
    ];
    const divider = '<span class="w-[3px] shrink-0 ml-1 mr-[6px] border-l border-r border-white"></span>';
    document.getElementById("toolbar").innerHTML = groups
      .map((g) =>
        '<div class="flex shrink-0 gap-1">' +
        g.map((n) => `<button aria-label="${n}" class="w-[22px] h-[25px] shrink-0 pb-[2px] bg-linear-to-b from-white to-[#f6f6f6] border border-[#b4b4b4] flex items-center justify-center"><svg class="w-[18px] h-[18px]"><use href="#i-${n}"/></svg></button>`).join("") +
        "</div>"
      )
      .join(divider);

    const tree = [
      { label: "Tools", icon: "tools", sign: "−" },
      { label: "Emails sent", icon: "mail", child: true },
      { label: "Alerts", icon: "alert", child: true },
      { label: "Messages", icon: "msg", child: true },
      { label: "Import Data", icon: "db", child: true, active: true },
      { label: "Environmental parameters", icon: "env", sign: "+" },
      { label: "Controls & Automation", icon: "robot", sign: "+" },
      { label: "Parameters", icon: "wrench", sign: "+" },
    ];
    document.getElementById("tree").innerHTML = tree
      .map((t) =>
        t.child
          ? `<li class="h-6 flex items-center pl-[45px]"><span class="w-[9px] h-6 border-l border-dotted border-[#999] flex items-center"><i class="w-full border-t border-dotted border-[#999]"></i></span><svg class="w-5 h-5 ml-2 mr-1 mt-1"><use href="#i-${t.icon}"/></svg><a href="#" class="${t.active ? "bg-[#cfcfcf]" : ""}">${t.label}</a></li>`
          : `<li class="h-6 flex items-center pl-[2px]"><button class="w-[11px] h-[11px] mt-[3px] border border-[#888] bg-white text-[10px] leading-[9px] flex items-center justify-center">${t.sign}</button><svg class="w-[22px] h-[22px] ml-[9px] mr-1 mt-[3px]"><use href="#i-${t.icon}"/></svg><a href="#">${t.label}</a></li>`
      )
      .join("");

    const columns = ["id", "reference", "project", "activity type", "name", "external reference", "creation date", "issuer", "requestor", "origin type", "origin id", "description", "parent activity", "status", "responsible", "handled", "handled date", "done", "done date", "closed", "closed date", "cancelled", "target version", "result"];
    document.getElementById("head").innerHTML = columns
      .map((c) => `<th class="h-[57px] p-0 pt-px font-normal leading-[14px] border-r border-b border-black bg-linear-to-b from-[#f8f8f8] via-[#dedede] via-60% to-[#dcdcdc]">${c}</th>`)
      .join("");

    const items = [
      { name: "B?o trì<br>khu<br>v?c<br>v?n<br>phòng", parent: "" },
      { name: "B?o trì<br>phòng<br>QA", parent: "B?o trì<br>khu<br>v?c<br>v?n<br>phòng" },
      { name: "B?o trì<br>t?<br>ki?m<br>m?u", parent: "B?o trì<br>phòng<br>QA" },
      { name: "B?o trì<br>máy<br>tính", parent: "B?o trì<br>t?<br>ki?m<br>m?u" },
      { name: "B?o trì<br>t?<br>ch?t<br>l??ng", parent: "B?o trì<br>phòng<br>QA" },
    ];
    document.getElementById("rows").innerHTML = items
      .map((i) => {
        const cells = ["", "", "B?O<br>TRÌ<br>H?<br>TH?NG", "Task", i.name, "", "2016-08-04", "admin<br>#", "", "", "", "", i.parent, "recorded", "", "0", "", "0", "", "0", "", "0", "", ""];
        return "<tr>" + cells.map((c) => `<td class="h-[81px] p-0 pl-[5px] pt-px align-top whitespace-nowrap leading-[13px] border-r border-b border-black">${c}</td>`).join("") + "</tr>";
      })
      .join("");
  </script>
</body>
</html>
